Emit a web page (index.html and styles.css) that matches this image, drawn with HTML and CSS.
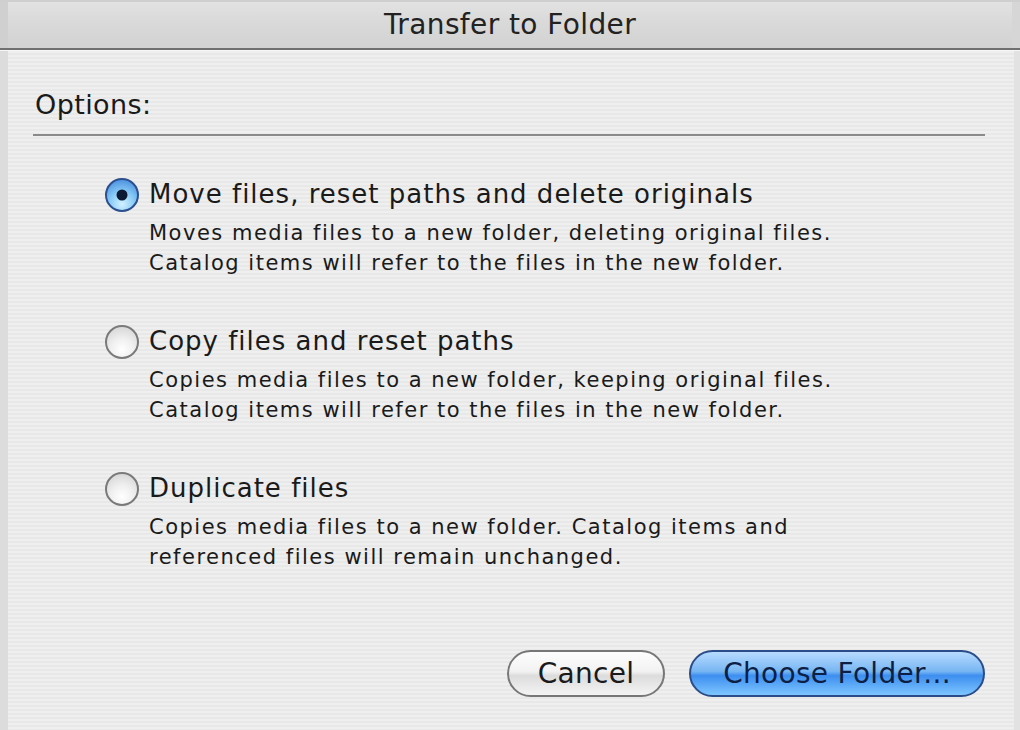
FILE: index.html
```html
<!DOCTYPE html>
<html lang="en">
<head>
    <meta charset="UTF-8" />
    <title>Transfer to Folder</title>
    <link rel="stylesheet" href="styles.css">
</head>
<body>
    <div class="window">
        <div class="titlebar">Transfer to Folder</div>
        <div class="sheet">
            <div class="section-label">Options:</div>
            <div class="rule"></div>

            <div class="options">
                <div class="option">
                    <span class="radio checked"></span>
                    <div class="option-text">
                        <div class="option-title">Move files, reset paths and delete originals</div>
                        <div class="option-desc">Moves media files to a new folder, deleting original files.<br>Catalog items will refer to the files in the new folder.</div>
                    </div>
                </div>
                <div class="option">
                    <span class="radio"></span>
                    <div class="option-text">
                        <div class="option-title">Copy files and reset paths</div>
                        <div class="option-desc">Copies media files to a new folder, keeping original files.<br>Catalog items will refer to the files in the new folder.</div>
                    </div>
                </div>
                <div class="option">
                    <span class="radio"></span>
                    <div class="option-text">
                        <div class="option-title">Duplicate files</div>
                        <div class="option-desc">Copies media files to a new folder. Catalog items and<br>referenced files will remain unchanged.</div>
                    </div>
                </div>
            </div>

            <div class="buttons">
                <button class="btn">Cancel</button>
                <button class="btn primary">Choose Folder...</button>
            </div>
        </div>
    </div>
</body>
</html>
```

FILE: styles.css
```css
/* Sheet dialog */
body {
    margin: 0;
    font-family: 'DejaVu Sans', 'Liberation Sans', sans-serif;
    color: #1a1a1a;
    background: #ececec;
}

.window {
    width: 1020px;
    height: 730px;
    display: flex;
    flex-direction: column;
    overflow: hidden;
}

.titlebar {
    height: 46px;
    line-height: 46px;
    text-align: center;
    font-size: 28px;
    color: #222;
    background: linear-gradient(#e2e2e2, #dadada 40%, #d2d2d2);
    border-top: 2px solid #cfcfcf;
    border-bottom: 2px solid #707070;
    box-shadow: inset 8px 0 0 #d0d0d0, inset -8px 0 0 #d6d6d6;
    letter-spacing: 0.4px;
}

.sheet {
    flex: 1;
    display: flex;
    flex-direction: column;
    padding: 38px 35px 33px 33px;
    background: repeating-linear-gradient(#efefef 0 2px, #e8e8e8 2px 4px);
    box-shadow: inset 8px 0 0 #dcdcdc, inset -6px 0 0 #e2e2e2;
    border-top: 1px solid #f6f6f6;
}

.section-label {
    font-size: 27px;
    letter-spacing: 0.4px;
    padding-left: 2px;
    line-height: 32px;
}

.rule {
    height: 2px;
    background: #8a8a8a;
    margin-top: 13px;
}

.options {
    display: flex;
    flex-direction: column;
    gap: 45px;
    padding: 40px 0 0 72px;
}

.option {
    display: flex;
    align-items: flex-start;
    gap: 10px;
}

.option-title {
    font-size: 26px;
    letter-spacing: 1px;
    line-height: 36px;
}

.option-desc {
    font-size: 21px;
    letter-spacing: 1.5px;
    line-height: 29.5px;
    margin-top: 7px;
}

.radio {
    width: 30px;
    height: 30px;
    margin-top: 2px;
    border-radius: 50%;
    border: 2px solid #7a7a7a;
    background: radial-gradient(circle at 50% 75%, #ffffff 0, #f0f0f0 40%, #cfcfcf 100%);
    flex-shrink: 0;
    position: relative;
}

.radio.checked {
    border-color: #2c4f8e;
    background: radial-gradient(circle at 50% 80%, #d2f2ff 0, #86c9f6 45%, #3b7fd8 100%);
}

.radio.checked::after {
    content: '';
    position: absolute;
    width: 11px;
    height: 11px;
    left: 50%;
    top: 50%;
    transform: translate(-50%, -50%);
    border-radius: 50%;
    background: #0c1a33;
}

.buttons {
    margin-top: auto;
    display: flex;
    justify-content: flex-end;
    gap: 24px;
}

.btn {
    height: 47px;
    border-radius: 24px;
    font-family: inherit;
    font-size: 28px;
    letter-spacing: 0.3px;
    color: #1a1a1a;
    padding: 0 20px;
    border: 2px solid #777;
    background: linear-gradient(#fdfdfd, #f2f2f2 45%, #dcdcdc 55%, #f4f4f4);
    min-width: 158px;
}

.btn.primary {
    color: #0d1f45;
    min-width: 296px;
    border-color: #2a4d8a;
    background: linear-gradient(#b7dbff, #77b6f3 45%, #3d8ef0 55%, #7ec6ff);
}
```
